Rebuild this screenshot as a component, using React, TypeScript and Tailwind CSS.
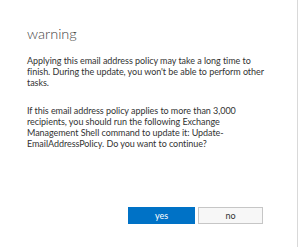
import React from "react";

export default function App() {
  return (
    <div className="w-[300px] h-[247px] bg-white flex overflow-hidden" style={{ fontFamily: 'Lato, "Open Sans", sans-serif' }}>
      <div className="flex-1 flex flex-col pl-[27px] pt-[24px]">
        <div className="text-[14.5px] font-light text-[#444] leading-[20px]">warning</div>
        <div className="mt-[11px] text-[9px] leading-[11px] text-[#333] tracking-[-0.05px] whitespace-nowrap">
          <p>Applying this email address policy may take a long time to<br />finish. During the update, you won't be able to perform other<br />tasks.</p>
          <p className="mt-[17px]">If this email address policy applies to more than 3,000<br />recipients, you should run the following Exchange<br />Management Shell command to update it: Update-<br />EmailAddressPolicy. Do you want to continue?</p>
        </div>
        <div className="mt-auto mb-[23px] flex gap-[3px] pl-[101px]">
          <button className="w-[67px] h-[17px] bg-[#0072c6] text-white text-[9px] leading-none">yes</button>
          <button className="w-[65px] h-[17px] bg-[#f7f7f7] border border-[#c6c6c6] text-[#333] text-[9px] leading-none">no</button>
        </div>
      </div>
      <div className="w-[1px] bg-[#d9d9d9] mr-[2px]" />
    </div>
  );
}
